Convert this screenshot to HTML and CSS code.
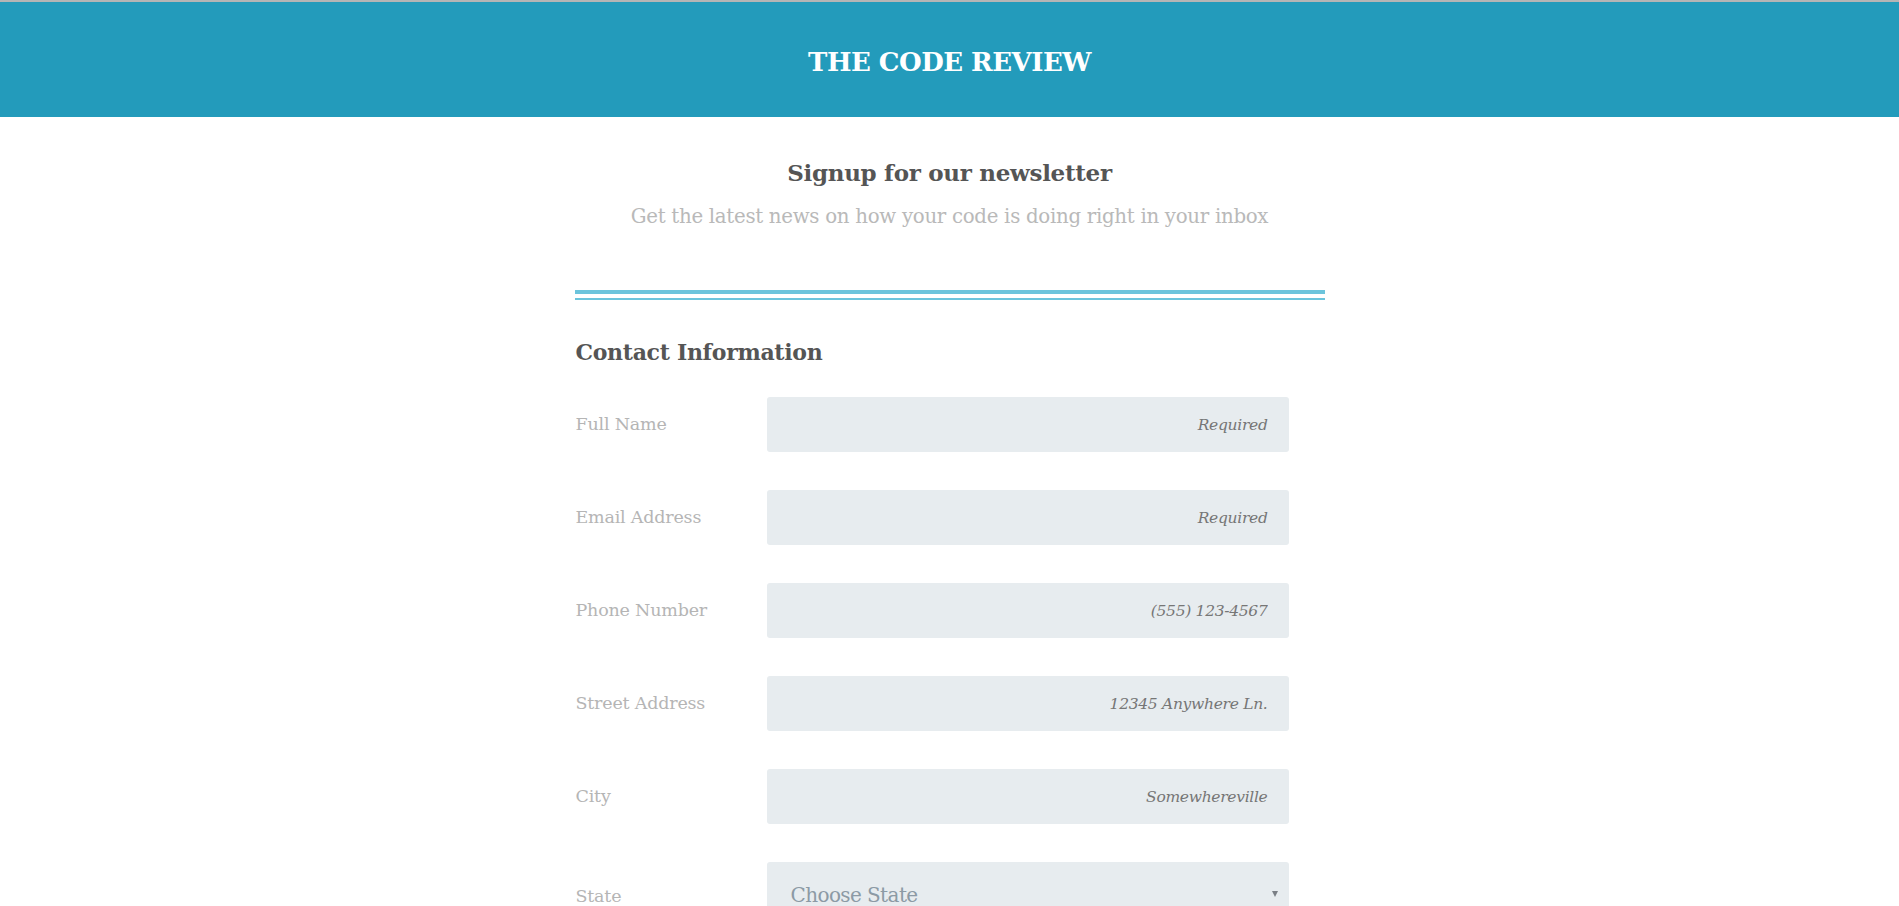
FILE: index.html
```html
<!DOCTYPE html>
<html lang="en">
<head>
<meta charset="utf-8">
<title>The Code Review</title>
<link rel="stylesheet" href="styles.css">
</head>
<body>
<header class="site-header">
  <h1 class="site-title">THE CODE REVIEW</h1>
</header>
<main class="container">
  <h2 class="intro-title">Signup for our newsletter</h2>
  <p class="intro-sub">Get the latest news on how your code is doing right in your inbox</p>
  <div class="divider"></div>
  <h3 class="section-title">Contact Information</h3>
  <form class="form">
    <div class="row">
      <label class="label" for="name">Full Name</label>
      <input class="field" id="name" type="text" placeholder="Required">
    </div>
    <div class="row">
      <label class="label" for="email">Email Address</label>
      <input class="field" id="email" type="email" placeholder="Required">
    </div>
    <div class="row">
      <label class="label" for="phone">Phone Number</label>
      <input class="field" id="phone" type="tel" placeholder="(555) 123-4567">
    </div>
    <div class="row">
      <label class="label" for="street">Street Address</label>
      <input class="field" id="street" type="text" placeholder="12345 Anywhere Ln.">
    </div>
    <div class="row">
      <label class="label" for="city">City</label>
      <input class="field" id="city" type="text" placeholder="Somewhereville">
    </div>
    <div class="row row-state">
      <label class="label" for="state">State</label>
      <div class="select-wrap">
        <select class="select" id="state">
          <option>Choose State</option>
        </select>
      </div>
    </div>
  </form>
</main>
</body>
</html>
```

FILE: styles.css
```css
* { box-sizing: border-box; }

html, body {
  margin: 0;
  padding: 0;
  background: #ffffff;
  font-family: "DejaVu Serif", "Liberation Serif", serif;
}

.site-header {
  border-top: 2px solid #b5b5b5;
  background: #239bbb;
  height: 117px;
  display: flex;
  align-items: center;
  justify-content: center;
}

.site-title {
  margin: 0;
  color: #ffffff;
  font-size: 26px;
  font-weight: 700;
  letter-spacing: -0.5px;
  padding-top: 4px;
}

.container {
  width: 750px;
  margin: 0 auto;
}

.intro-title {
  margin: 41px 0 0;
  text-align: center;
  color: #555555;
  font-size: 23px;
  line-height: 30px;
  font-weight: 700;
  letter-spacing: -0.3px;
}

.intro-sub {
  margin: 16px 0 0;
  text-align: center;
  color: #b9b9b9;
  font-size: 19.8px;
  line-height: 26px;
  letter-spacing: -0.3px;
}

.divider {
  margin-top: 60px;
  height: 10px;
  border-top: 4px solid #6cc4dc;
  border-bottom: 2px solid #6cc4dc;
}

.section-title {
  margin: 37px 0 0 1px;
  color: #555555;
  font-size: 22px;
  line-height: 30px;
  font-weight: 700;
  letter-spacing: -0.3px;
}

.form {
  margin-top: 30px;
  display: flex;
  flex-direction: column;
  gap: 38px;
}

.row {
  display: grid;
  grid-template-columns: 192px 522px;
  align-items: center;
}

.label {
  padding-left: 1px;
  padding-bottom: 2px;
  color: #b5b5b5;
  font-size: 17.5px;
  letter-spacing: -0.2px;
}

.row-state .label {
  padding-top: 12px;
  padding-bottom: 0;
}

.field {
  height: 55px;
  width: 522px;
  border: none;
  border-radius: 3px;
  background: #e7ecef;
  padding: 0 21px;
  text-align: right;
  font-family: "DejaVu Serif", "Liberation Serif", serif;
  font-size: 15.5px;
  color: #555555;
  outline: none;
}

.field::placeholder {
  color: #767676;
  font-style: italic;
  letter-spacing: -0.3px;
}

.select-wrap {
  position: relative;
  width: 522px;
}

.select {
  appearance: none;
  -webkit-appearance: none;
  width: 100%;
  height: 55px;
  border: none;
  border-radius: 3px;
  background: #e7ecef;
  padding: 10px 24px 0;
  font-family: "DejaVu Serif", "Liberation Serif", serif;
  font-size: 20px;
  letter-spacing: -0.6px;
  color: #8c9aa5;
  outline: none;
}

.select-wrap::after {
  content: "";
  position: absolute;
  right: 11px;
  top: 29px;
  border-left: 3.5px solid transparent;
  border-right: 3.5px solid transparent;
  border-top: 6px solid #7a7f85;
}
```
